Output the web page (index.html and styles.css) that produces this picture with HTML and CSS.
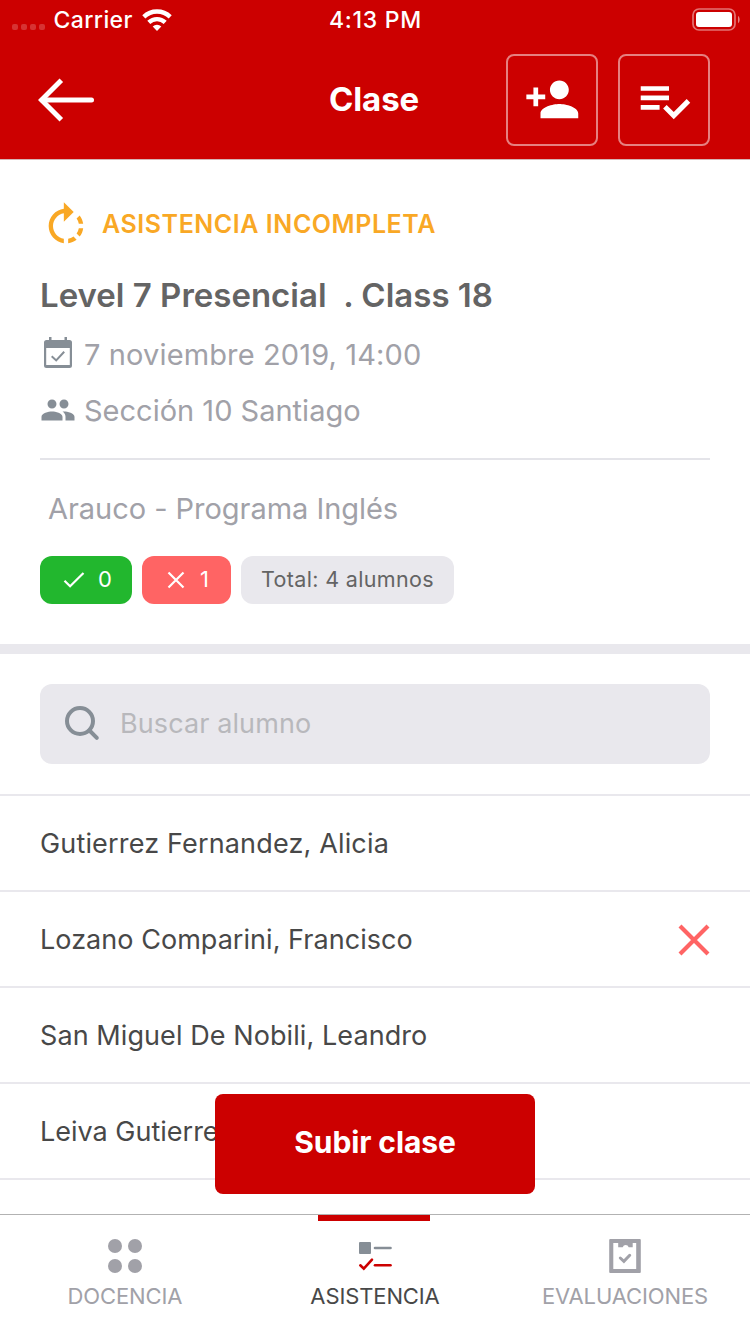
FILE: index.html
```html
<!DOCTYPE html>
<html lang="es">
<head>
<meta charset="utf-8">
<title>Clase</title>
<link rel="stylesheet" href="styles.css">
</head>
<body>
<div class="app">
  <header class="header">
    <div class="status">
      <div class="status-left">
        <span class="signal"><i></i><i></i><i></i><i></i></span>
        <span class="carrier">Carrier</span>
        <svg class="wifi" width="30" height="22" viewBox="0 0 30 22"><g fill="none" stroke="#fff" stroke-width="4.400"><path d="M1.800 7.900a19 19 0 0 1 26.400 0"/><path d="M6.800 13.400a12 12 0 0 1 16.400 0"/></g><path d="M15 22l-4.300-4.400a6.200 6.200 0 0 1 8.600 0z" fill="#fff"/></svg>
      </div>
      <span class="time">4:13 PM</span>
      <div class="status-right">
        <svg width="48" height="24" viewBox="0 0 48 24"><rect x="1" y="1" width="42" height="21" rx="6" fill="none" stroke="#fff" stroke-opacity=".45" stroke-width="1.700"/><rect x="4" y="4" width="36" height="15" rx="3" fill="#fff"/><path d="M46 8c2.200 1.200 2.200 6 0 7.200z" fill="#fff" fill-opacity=".5"/></svg>
      </div>
    </div>
    <div class="nav">
      <div class="nav-side">
        <svg class="back" width="58" height="44" viewBox="0 0 58 44" fill="none" stroke="#fff" stroke-width="5"><path d="M23.300 2.200L3.500 22l19.800 19.800"/><path d="M4 22h49.500" stroke-linecap="round"/></svg>
      </div>
      <h1 class="nav-title">Clase</h1>
      <div class="nav-side nav-actions">
        <button class="square person"><svg width="56.600" height="56.600" viewBox="0 0 24 24" fill="#fff"><path d="M15 12c2.210 0 4-1.790 4-4s-1.790-4-4-4-4 1.790-4 4 1.790 4 4 4zm-9-2V7H4v3H1v2h3v3h2v-3h3v-2H6zm9 4c-2.670 0-8 1.340-8 4v2h16v-2c0-2.660-5.330-4-8-4z"/></svg></button>
        <button class="square"><svg width="56.600" height="56.600" viewBox="0 0 24 24" fill="#fff"><path d="M14 10H2v2h12v-2zm0-4H2v2h12V6zM2 16h8v-2H2v2zm19.500-4.500L23 13l-6.990 7-4.510-4.500L13 14l3.010 3 5.490-5.500z"/></svg></button>
      </div>
    </div>
  </header>

  <section class="info">
    <div class="state">
      <svg width="52" height="52" viewBox="0 0 24 24" fill="#f9a825"><path d="M15.550 5.550L11 1v3.070C7.060 4.560 4 7.920 4 12s3.050 7.440 7 7.930v-2.020c-2.840-.48-5-2.940-5-5.910s2.160-5.430 5-5.910V10l4.550-4.450zM19.930 11c-.17-1.390-.72-2.730-1.620-3.890l-1.420 1.420c.54.75.88 1.600 1.020 2.470h2.020zM13 17.900v2.020c1.390-.17 2.740-.71 3.900-1.610l-1.440-1.440c-.75.54-1.590.89-2.460 1.030zm3.890-2.420l1.420 1.410c.9-1.160 1.450-2.500 1.620-3.890h-2.020c-.14.87-.48 1.720-1.020 2.480z"/></svg>
      <span class="state-text">ASISTENCIA INCOMPLETA</span>
    </div>
    <h2 class="title">Level 7 Presencial &nbsp;. Class 18</h2>
    <div class="meta">
      <svg width="36" height="36" viewBox="0 0 36 36"><path d="M9 2h2.500v3h13V2H27v3h2.500a2.500 2.500 0 0 1 2.500 2.500v23a2.500 2.500 0 0 1-2.500 2.500h-23A2.500 2.500 0 0 1 4 30.500v-23A2.500 2.500 0 0 1 6.500 5H9zM6.200 13v17h23.600V13z" fill="#868e96" fill-rule="evenodd"/><path d="M11.700 21.200l4.500 4.200 8-8.700" fill="none" stroke="#868e96" stroke-width="2"/></svg>
      <span class="meta-text date">7 noviembre 2019, 14:00</span>
    </div>
    <div class="meta">
      <svg class="people" width="36" height="36" viewBox="0 0 24 24" fill="#868e96"><path d="M16 11c1.660 0 2.990-1.340 2.990-3S17.660 5 16 5c-1.660 0-3 1.340-3 3s1.340 3 3 3zm-8 0c1.660 0 2.990-1.340 2.990-3S9.660 5 8 5C6.340 5 5 6.340 5 8s1.340 3 3 3zm0 2c-2.330 0-7 1.170-7 3.500V19h14v-2.500c0-2.330-4.670-3.500-7-3.500zm8 0c-.29 0-.62.02-.97.05 1.160.84 1.970 1.970 1.970 3.450V19h6v-2.500c0-2.330-4.670-3.500-7-3.500z"/></svg>
      <span class="meta-text">Sección 10 Santiago</span>
    </div>
    <div class="program">Arauco - Programa Inglés</div>
    <div class="badges">
      <span class="badge ok"><svg width="22" height="18" viewBox="0 0 22 18" fill="none" stroke="#fff" stroke-width="2.200"><path d="M1.500 9.700l5.600 5.600L20.500 2"/></svg><span class="count">0</span></span>
      <span class="badge bad"><svg width="18" height="18" viewBox="0 0 18 18" fill="none" stroke="#fff" stroke-width="2.200"><path d="M1.500 1.500l15 15M16.500 1.500l-15 15"/></svg><span class="count">1</span></span>
      <span class="badge total"><span class="count">Total: 4 alumnos</span></span>
    </div>
  </section>

  <section class="search-wrap">
    <div class="search">
      <svg width="36" height="36" viewBox="0 0 36 36" fill="none" stroke="#868e96" stroke-width="4"><circle cx="16" cy="16" r="13"/><path d="M25.500 25.500l7.300 7.300" stroke-linecap="round"/></svg>
      <span class="placeholder">Buscar alumno</span>
    </div>
  </section>

  <main class="list">
    <div class="row"><span class="r1">Gutierrez Fernandez, Alicia</span></div>
    <div class="row"><span class="r2">Lozano Comparini, Francisco</span><svg class="absent" width="32" height="32" viewBox="0 0 32 32" fill="none" stroke="#ff6464" stroke-width="4.200"><path d="M2 2l28 28M30 2L2 30"/></svg></div>
    <div class="row"><span class="r3">San Miguel De Nobili, Leandro</span></div>
    <div class="row"><span class="r4">Leiva Gutierrez</span></div>
    <button class="upload">Subir clase</button>
  </main>

  <nav class="tabs">
    <div class="tab">
      <svg width="36" height="36" viewBox="0 0 36 36" fill="#a1a1a8"><circle cx="8" cy="8" r="7"/><circle cx="28" cy="8" r="7"/><circle cx="8" cy="28" r="7"/><circle cx="28" cy="28" r="7"/></svg>
      <span>DOCENCIA</span>
    </div>
    <div class="tab active">
      <svg width="36" height="36" viewBox="0 0 36 36"><rect x="2" y="4" width="12" height="12" rx="1" fill="#868e96"/><g fill="none" stroke-width="2.600" stroke-linecap="round"><path d="M18 10h15.500" stroke="#868e96"/><path d="M18 27.300h15.500" stroke="#c00"/><path d="M3.300 27.300l3.500 3.300L15 21.700" stroke="#c00"/></g></svg>
      <span>ASISTENCIA</span>
    </div>
    <div class="tab">
      <svg width="36" height="36" viewBox="0 0 36 36"><path d="M3.200 1h29.600a1 1 0 0 1 1 1v32a1 1 0 0 1-1 1H3.200a1 1 0 0 1-1-1V2a1 1 0 0 1 1-1zM6.300 5v26h22.900V5h-3.500v4.200h-4a3.200 3.200 0 0 0-6 0h-4.500V5z" fill="#a1a1a8" fill-rule="evenodd"/><path d="M13.300 20l3.600 3.300 5.800-6" fill="none" stroke="#a1a1a8" stroke-width="3" stroke-linecap="round"/></svg>
      <span>EVALUACIONES</span>
    </div>
  </nav>
</div>
</body>
</html>
```
FILE: styles.css
```css
* { box-sizing: border-box; }
body { margin: 0; font-family: Inter, "Liberation Sans", sans-serif; font-weight: 400; background: #fff; }
svg { display: block; flex: none; }
span { white-space: nowrap; }
button { font: inherit; margin: 0; padding: 0; }
.app { width: 750px; height: 1334px; display: flex; flex-direction: column; overflow: hidden; }

.header { height: 160px; flex: none; background: #c00; color: #fff; border-bottom: 1px solid #d5b4b4; }
.status { height: 40px; display: grid; grid-template-columns: 1fr auto 1fr; align-items: center; font-size: 23px; font-weight: 500; padding: 0 10px 0 12px; }
.status-left { display: flex; align-items: center; }
.signal { display: flex; gap: 3px; margin: 14px 8.500px 0 0; }
.signal i { width: 6px; height: 6px; border-radius: 2px; background: rgba(255, 255, 255, .2); }
.carrier { letter-spacing: .4px; }
.wifi { margin-left: 9.500px; margin-bottom: 1px; }
.time { letter-spacing: .75px; margin-right: 1px; }
.status-right { display: flex; justify-content: flex-end; margin-left: -2px; }
.nav { height: 119px; display: grid; grid-template-columns: 1fr auto 1fr; align-items: center; padding: 1px 40px 0 38px; }
.nav-title { margin: 0 0 2px; font-size: 33px; font-weight: 700; line-height: 40px; letter-spacing: -.1px; }
.nav-actions { display: flex; justify-content: flex-end; gap: 20px; }
.square { width: 92px; height: 92px; display: flex; align-items: center; justify-content: center; background: none; border: 2px solid rgba(255, 255, 255, .5); border-radius: 8px; }
.person { padding-bottom: 2px; }

.info { height: 494px; flex: none; padding: 40px 40px 0; border-bottom: 10px solid #e9e8ed; }
.state { height: 52px; display: flex; align-items: center; gap: 10px; color: #f9a825; }
.state-text { font-size: 25px; font-weight: 600; line-height: 30px; margin-top: -4px; letter-spacing: .55px; }
.title { margin: 23px 0 0; height: 40px; line-height: 40px; font-size: 33px; font-weight: 600; color: #646464; white-space: nowrap; }
.meta { height: 36px; display: flex; align-items: center; gap: 8px; margin-top: 20px; color: #a1a1a8; font-size: 29px; line-height: 36px; }
.meta-text { margin-top: 4px; }
.date { letter-spacing: .13px; }
.people { margin-top: 2px; }
.program { margin-top: 31px; border-top: 2px solid #e4e4e9; padding: 32px 0 0 8px; height: 98px; line-height: 34px; font-size: 29px; color: #a1a1a8; letter-spacing: -.04px; }
.badges { display: flex; gap: 10px; }
.badge { height: 48px; display: flex; align-items: center; border-radius: 12px; font-size: 22px; color: #fff; }
.count { margin-bottom: 2px; }
.ok { width: 92px; padding-left: 23px; gap: 13px; background: #22b72e; }
.bad { width: 89px; padding-left: 25px; gap: 15px; background: #ff6464; }
.total { width: 213px; justify-content: center; background: #e9e8ed; color: #646464; font-size: 21.5px; letter-spacing: .35px; }

.search-wrap { height: 142px; flex: none; padding: 30px 40px 0; border-bottom: 2px solid #e9e8ed; }
.search { height: 80px; border-radius: 12px; background: #e9e8ed; display: flex; align-items: center; padding: 0 0 2px 24px; gap: 20px; }
.placeholder { font-size: 27px; color: #b8b8bc; letter-spacing: .1px; }

.list { position: relative; flex: 1; }
.row { height: 96px; display: flex; align-items: center; justify-content: space-between; padding: 0 40px; border-bottom: 2px solid #e9e8ed; font-size: 27px; color: #484848; }
.r1 { letter-spacing: .16px; }
.r2 { letter-spacing: .04px; }
.r3 { letter-spacing: .08px; }
.absent { margin-top: 2px; }
.upload { position: absolute; left: 215px; top: 298px; width: 320px; height: 100px; border: 0; border-radius: 8px; background: #c00; color: #fff; font-size: 30px; font-weight: 700; letter-spacing: -.1px; padding-bottom: 4px; }

.tabs { height: 120px; flex: none; display: grid; grid-template-columns: repeat(3, 1fr); border-top: 1px solid #b2b2b2; }
.tab { display: flex; flex-direction: column; align-items: center; gap: 7px; padding-top: 23px; border-top: 0 solid #c00; font-size: 22px; line-height: 30px; letter-spacing: -.12px; color: #a1a1a8; }
.active { width: 112px; margin-left: 68px; border-top-width: 6px; padding: 17px 0 0 2px; color: #484848; }
```
